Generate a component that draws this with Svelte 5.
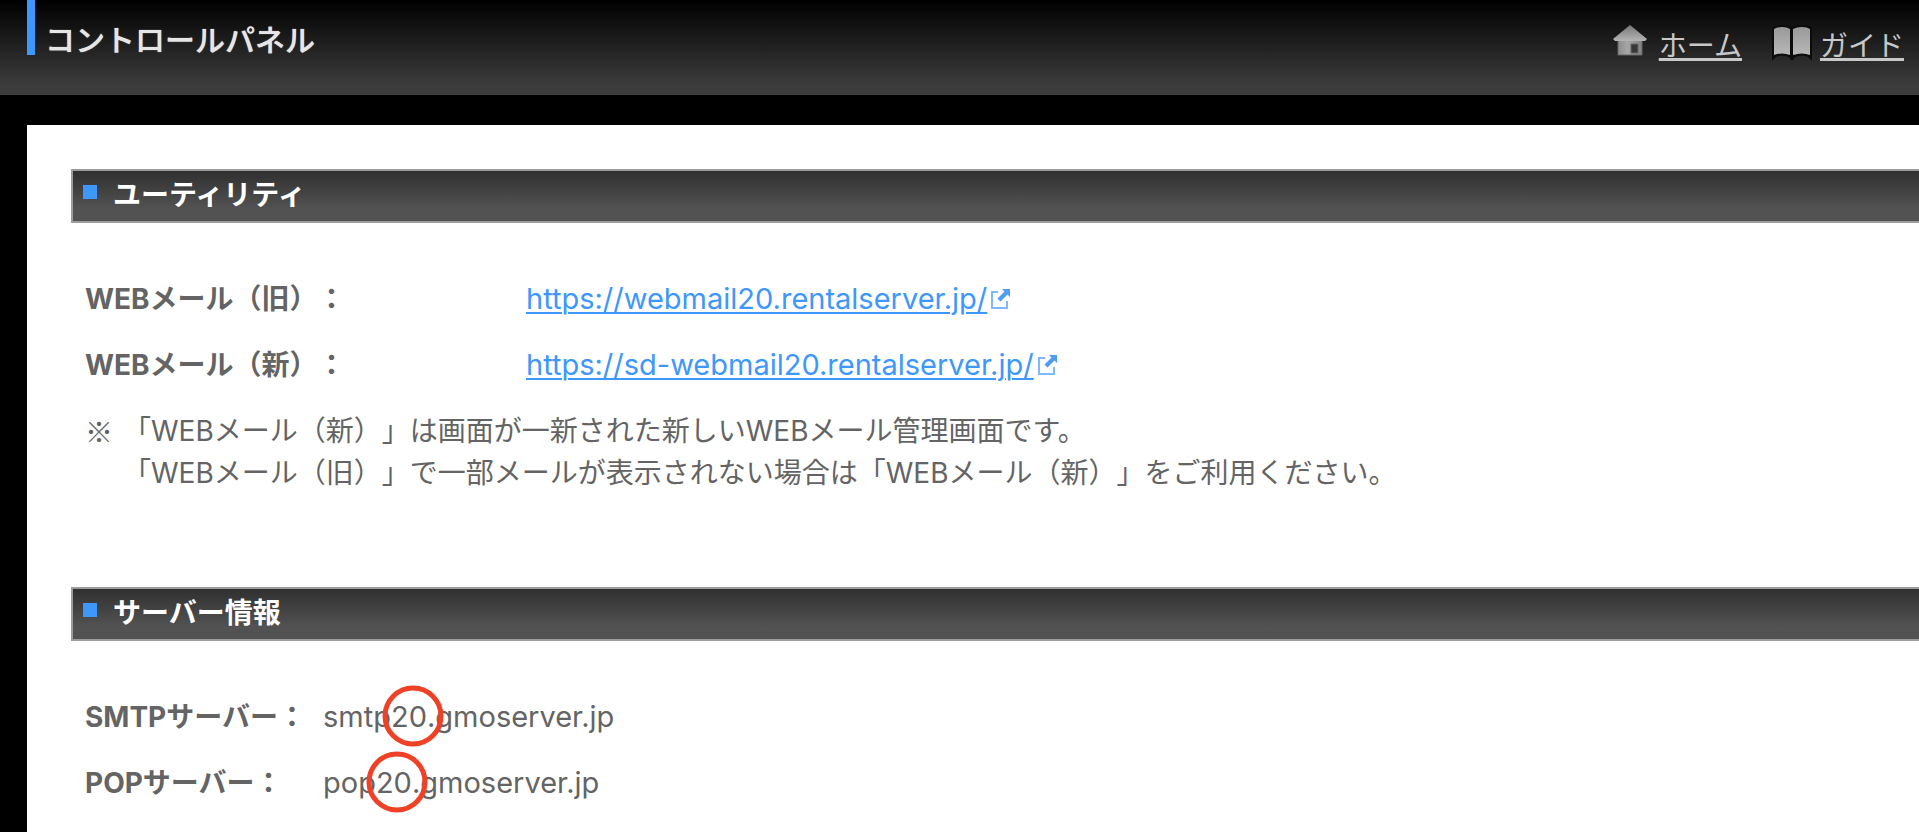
<script lang="ts">
  const mails = [
    { label: 'WEBメール（旧）：', url: 'https://webmail20.rentalserver.jp/' },
    { label: 'WEBメール（新）：', url: 'https://sd-webmail20.rentalserver.jp/' },
  ];

  const servers = [
    { label: 'SMTPサーバー：', prefix: 'smtp', num: '20', domain: '.gmoserver.jp' },
    { label: 'POPサーバー：', prefix: 'pop', num: '20', domain: '.gmoserver.jp' },
  ];
</script>

<header>
  <h1>コントロールパネル</h1>
  <nav>
    <a href="#home">
      <svg class="home" width="38" height="32" viewBox="0 0 38 32" aria-hidden="true">
        <defs>
          <linearGradient id="roof" x1="0" y1="0" x2="0" y2="1">
            <stop offset="0" stop-color="#777" />
            <stop offset="1" stop-color="#b4b4b4" />
          </linearGradient>
          <linearGradient id="wall" x1="0" y1="0" x2="1" y2="0">
            <stop offset="0" stop-color="#8c8c8c" />
            <stop offset="0.4" stop-color="#a6a6a6" />
            <stop offset="1" stop-color="#828282" />
          </linearGradient>
        </defs>
        <path d="M5 14h24v16H5z" fill="url(#wall)" stroke="#666" />
        <path d="M17 0L34 14L32 16H2L0 14z" fill="url(#roof)" />
        <path d="M18 19h7v9h-7z" fill="#383838" stroke="#666" />
      </svg>
      <span>ホーム</span>
    </a>
    <a href="#guide">
      <svg class="book" width="40" height="36" viewBox="0 0 40 36" aria-hidden="true">
        <defs>
          <linearGradient id="page" x1="0" y1="0" x2="0" y2="1">
            <stop offset="0" stop-color="#999" />
            <stop offset="1" stop-color="#b8b8b8" />
          </linearGradient>
        </defs>
        <path d="M0 2Q10-2 20 2Q30-2 40 2V36L36 32Q30 29 23 32L20 36L17 32Q10 29 4 32L0 36z" fill="#0c0c0c" />
        <path d="M2 4Q5 2 10 2Q15 2 18 4V30Q10 27 2 30z" fill="url(#page)" />
        <path d="M21 4Q25 2 30 2Q35 2 38 4V30Q30 27 21 30z" fill="url(#page)" />
      </svg>
      <span>ガイド</span>
    </a>
  </nav>
</header>

<main>
  <section>
    <h2>ユーティリティ</h2>
    <dl class="mails">
      {#each mails as mail}
        <dt>{mail.label}</dt>
        <dd>
          <a href={mail.url}>{mail.url}</a><svg width="22" height="22" viewBox="0 0 22 22" aria-hidden="true">
            <path d="M9 4H3V20H18V13" fill="none" stroke="#80b9fa" stroke-width="2" />
            <path d="M13 1H21V9L18.5 6.5L11.5 13.5L8.5 10.5L15.5 3.5z" fill="#4f9df7" />
          </svg>
        </dd>
      {/each}
    </dl>
    <div class="note">
      <span>※</span>
      <p>
        「WEBメール（新）」は画面が一新された新しいWEBメール管理画面です。<br />
        「WEBメール（旧）」で一部メールが表示されない場合は「WEBメール（新）」をご利用ください。
      </p>
    </div>
  </section>

  <section>
    <h2>サーバー情報</h2>
    <dl class="servers">
      {#each servers as server}
        <dt>{server.label}</dt>
        <dd>{server.prefix}<span class="mark">{server.num}</span>{server.domain}</dd>
      {/each}
    </dl>
  </section>
</main>

<style>
  :global(body) {
    background: #000;
    color: #646464;
    font-family: Inter, 'Noto Sans CJK JP', sans-serif;
    font-size: 28px;
    line-height: 42px;
    text-spacing-trim: space-all;
    overflow: hidden;
  }

  header {
    display: flex;
    justify-content: space-between;
    align-items: flex-start;
    height: 95px;
    padding: 0 15px 0 27px;
    box-sizing: border-box;
    background: linear-gradient(#000, #3c3c3c 90%);
  }
  h1 {
    height: 55px;
    margin: 0;
    padding: 19px 0 0 10px;
    box-sizing: border-box;
    border-left: 8px solid #3e97fa;
    color: #e6e6e6;
    font-size: 30px;
    font-weight: 500;
    line-height: 42px;
    text-shadow: 0 0 1px #e6e6e6;
  }
  nav {
    display: flex;
    gap: 30px;
    padding-top: 25px;
  }
  nav a {
    display: flex;
    gap: 8px;
    color: #c8c8c8;
  }
  nav span {
    text-decoration: underline;
    text-decoration-thickness: 2px;
    text-underline-offset: 3px;
  }

  main {
    min-height: 707px;
    margin: 30px 0 0 27px;
    padding: 44px 0 0 44px;
    box-sizing: border-box;
    background: #fff;
  }
  section {
    margin-bottom: 93px;
  }
  h2 {
    display: flex;
    align-items: center;
    gap: 16px;
    height: 54px;
    margin: 0 0 55px;
    padding: 0 10px 2px;
    box-sizing: border-box;
    border: 2px solid #9c9c9c;
    border-right: 0;
    background: linear-gradient(#303030, #525252 75%);
    color: #fff;
    font-size: 28px;
  }
  h2::before {
    content: '';
    width: 14px;
    height: 14px;
    margin-bottom: 6px;
    background: #3e97fa;
  }

  dl {
    display: grid;
    row-gap: 24px;
    margin: 0;
    padding-left: 14px;
  }
  .mails {
    grid-template-columns: 441px 1fr;
  }
  .servers {
    grid-template-columns: 238px 1fr;
  }
  dt {
    font-weight: bold;
  }
  dd {
    margin: 0;
    font-size: 29px;
  }
  dd a {
    color: #3e97fa;
    text-decoration-thickness: 2px;
    text-underline-offset: 3px;
  }
  dd svg {
    margin-left: 2px;
    vertical-align: -1px;
  }

  .note {
    display: flex;
    gap: 10px;
    margin-top: 24px;
    padding-left: 14px;
  }
  .note span {
    font-family: 'Noto Sans CJK JP', sans-serif;
  }
  .note p {
    margin: 0;
  }

  .mark {
    position: relative;
  }
  .mark::after {
    content: '';
    position: absolute;
    top: 48%;
    left: 60%;
    width: 61px;
    height: 61px;
    box-sizing: border-box;
    border: 5px solid #ee4126;
    border-radius: 50%;
    transform: translate(-50%, -50%);
  }
</style>
